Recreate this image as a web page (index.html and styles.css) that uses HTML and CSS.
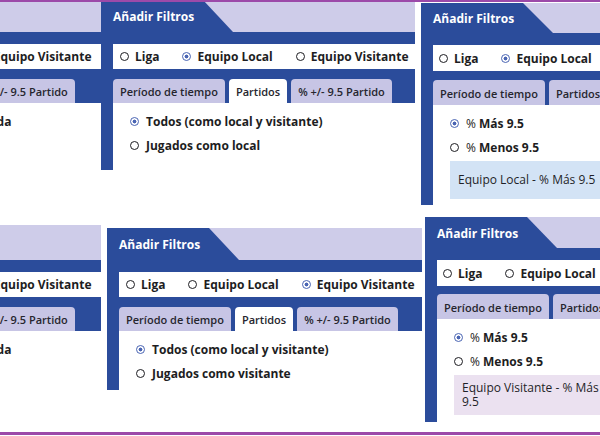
FILE: index.html
```html
<!DOCTYPE html>
<html lang="es">
<head>
<meta charset="utf-8">
<title>Añadir Filtros</title>
<link rel="stylesheet" href="styles.css">
</head>
<body>
<main class="canvas">

  <section class="panel panel--a">
    <header class="panel-head"><h2 class="panel-title">Añadir Filtros</h2></header>
    <div class="scope">
      <span class="opt"><span class="dot"></span><span>Liga</span></span>
      <span class="opt"><span class="dot"></span><span>Equipo Local</span></span>
      <span class="opt"><span class="dot dot--on"></span><span>Equipo Visitante</span></span>
    </div>
    <nav class="tabs">
      <span class="tab tab--on">Período de tiempo</span>
      <span class="tab">Partidos</span>
      <span class="tab">% +/- 9.5 Partido</span>
    </nav>
    <div class="tab-content">
      <span class="opt opt--row"><span class="dot dot--on"></span><span>Toda la temporada consultada</span></span>
      <span class="opt opt--row"><span class="dot"></span><span>Últimos partidos</span></span>
    </div>
  </section>

  <section class="panel panel--b">
    <header class="panel-head"><h2 class="panel-title">Añadir Filtros</h2></header>
    <div class="scope">
      <span class="opt"><span class="dot"></span><span>Liga</span></span>
      <span class="opt"><span class="dot dot--on"></span><span>Equipo Local</span></span>
      <span class="opt"><span class="dot"></span><span>Equipo Visitante</span></span>
    </div>
    <nav class="tabs">
      <span class="tab">Período de tiempo</span>
      <span class="tab tab--on">Partidos</span>
      <span class="tab">% +/- 9.5 Partido</span>
    </nav>
    <div class="tab-content">
      <span class="opt opt--row"><span class="dot dot--on"></span><span>Todos (como local y visitante)</span></span>
      <span class="opt opt--row"><span class="dot"></span><span>Jugados como local</span></span>
    </div>
  </section>

  <section class="panel panel--c">
    <header class="panel-head"><h2 class="panel-title">Añadir Filtros</h2></header>
    <div class="scope">
      <span class="opt"><span class="dot"></span><span>Liga</span></span>
      <span class="opt"><span class="dot dot--on"></span><span>Equipo Local</span></span>
      <span class="opt"><span class="dot"></span><span>Equipo Visitante</span></span>
    </div>
    <nav class="tabs">
      <span class="tab">Período de tiempo</span>
      <span class="tab">Partidos</span>
      <span class="tab tab--on">% +/- 9.5 Partido</span>
    </nav>
    <div class="tab-content">
      <span class="opt opt--row"><span class="dot dot--on"></span><span><span class="pct">%</span> Más 9.5</span></span>
      <span class="opt opt--row"><span class="dot"></span><span><span class="pct">%</span> Menos 9.5</span></span>
      <p class="summary summary--local">Equipo Local - % Más 9.5</p>
    </div>
  </section>

  <section class="panel panel--d">
    <header class="panel-head"><h2 class="panel-title">Añadir Filtros</h2></header>
    <div class="scope">
      <span class="opt"><span class="dot"></span><span>Liga</span></span>
      <span class="opt"><span class="dot"></span><span>Equipo Local</span></span>
      <span class="opt"><span class="dot dot--on"></span><span>Equipo Visitante</span></span>
    </div>
    <nav class="tabs">
      <span class="tab tab--on">Período de tiempo</span>
      <span class="tab">Partidos</span>
      <span class="tab">% +/- 9.5 Partido</span>
    </nav>
    <div class="tab-content">
      <span class="opt opt--row"><span class="dot dot--on"></span><span>Toda la temporada consultada</span></span>
      <span class="opt opt--row"><span class="dot"></span><span>Últimos partidos</span></span>
    </div>
  </section>

  <section class="panel panel--e">
    <header class="panel-head"><h2 class="panel-title">Añadir Filtros</h2></header>
    <div class="scope">
      <span class="opt"><span class="dot"></span><span>Liga</span></span>
      <span class="opt"><span class="dot"></span><span>Equipo Local</span></span>
      <span class="opt"><span class="dot dot--on"></span><span>Equipo Visitante</span></span>
    </div>
    <nav class="tabs">
      <span class="tab">Período de tiempo</span>
      <span class="tab tab--on">Partidos</span>
      <span class="tab">% +/- 9.5 Partido</span>
    </nav>
    <div class="tab-content">
      <span class="opt opt--row"><span class="dot dot--on"></span><span>Todos (como local y visitante)</span></span>
      <span class="opt opt--row"><span class="dot"></span><span>Jugados como visitante</span></span>
    </div>
  </section>

  <section class="panel panel--f">
    <header class="panel-head"><h2 class="panel-title">Añadir Filtros</h2></header>
    <div class="scope">
      <span class="opt"><span class="dot"></span><span>Liga</span></span>
      <span class="opt"><span class="dot"></span><span>Equipo Local</span></span>
      <span class="opt"><span class="dot dot--on"></span><span>Equipo Visitante</span></span>
    </div>
    <nav class="tabs">
      <span class="tab">Período de tiempo</span>
      <span class="tab">Partidos</span>
      <span class="tab tab--on">% +/- 9.5 Partido</span>
    </nav>
    <div class="tab-content">
      <span class="opt opt--row"><span class="dot dot--on"></span><span><span class="pct">%</span> Más 9.5</span></span>
      <span class="opt opt--row"><span class="dot"></span><span><span class="pct">%</span> Menos 9.5</span></span>
      <p class="summary summary--visit">Equipo Visitante - % Más 9.5</p>
    </div>
  </section>

  <div class="rule rule--top"></div>
  <div class="rule rule--bottom"></div>
</main>
</body>
</html>
```

FILE: styles.css
```css
* { box-sizing: border-box; }

html, body {
  margin: 0;
  padding: 0;
  background: #ffffff;
}

body {
  width: 600px;
  height: 436px;
  overflow: hidden;
  font-family: "Open Sans", "Noto Sans", sans-serif;
  color: #1d1d22;
}

.canvas {
  position: relative;
  width: 600px;
  height: 436px;
  overflow: hidden;
}

/* ---------- panel ---------- */
.panel {
  position: absolute;
  width: 314px;
  display: flex;
  flex-direction: column;
  background: #2b4c9b;
}

.panel--a { left: -216px; top: -3px;  width: 318px; height: 173px; }
.panel--b { left: 101px;  top: 0;     height: 170px; }
.panel--c { left: 421px;  top: 3px;   width: 200px; height: 202px; }
.panel--d { left: -216px; top: 225px; width: 317px; height: 170px; }
.panel--e { left: 107px;  top: 228px; width: 315px; height: 162px; }
.panel--f { left: 425px;  top: 217px; width: 200px; height: 205px; }

.panel-head {
  height: 32px;
  flex: none;
  background: #cecce9;
}
.panel--a .panel-head,
.panel--d .panel-head { height: 35px; }
.panel--c .panel-head { height: 30px; }
.panel--f .panel-head { height: 31px; }

.panel-title {
  margin: 0;
  width: 132px;
  height: 100%;
  display: flex;
  align-items: center;
  padding: 1px 0 0 12px;
  background: #2b4c9b;
  clip-path: polygon(0 0, 102px 0, 100% 100%, 0 100%);
  color: #ffffff;
  font-size: 12px;
  font-weight: 700;
  white-space: nowrap;
}

/* ---------- scope radio row ---------- */
.scope {
  flex: none;
  margin: 12px 0 0 12px;
  height: 25px;
  background: #ffffff;
  display: flex;
  align-items: center;
  gap: 23px;
  padding-left: 7px;
  white-space: nowrap;
}
.panel--c .scope,
.panel--f .scope { height: 26px; padding-left: 6px; }

.opt {
  display: inline-flex;
  align-items: center;
  gap: 6px;
  font-size: 12px;
  font-weight: 700;
  color: #1d1d22;
  white-space: nowrap;
}

.dot {
  flex: none;
  width: 9px;
  height: 9px;
  border-radius: 50%;
  border: 1.7px solid #1d1d22;
  background: #ffffff;
}
.dot--on {
  border-color: #4a65b3;
  background: radial-gradient(circle, #4a65b3 0 1.7px, #ffffff 2.2px);
}

/* ---------- tabs ---------- */
.tabs {
  flex: none;
  margin: 10px 0 0 12px;
  height: 24px;
  display: flex;
  gap: 4px;
}
.panel--c .tabs { margin-top: 9px; height: 25px; }
.panel--f .tabs { margin-top: 8px; height: 25px; }

.tab {
  display: flex;
  align-items: center;
  padding: 1px 7px 0;
  border-radius: 4px 4px 0 0;
  background: #c7c5e5;
  font-size: 11px;
  font-weight: 600;
  color: #26262e;
  white-space: nowrap;
}
.tab--on { background: #ffffff; }
.panel--c .tab--on,
.panel--f .tab--on { background: #c7c5e5; }

/* ---------- content ---------- */
.tab-content {
  flex: 1;
  margin-left: 12px;
  background: #ffffff;
  padding: 6px 0 0 17px;
  display: flex;
  flex-direction: column;
  align-items: flex-start;
}

.opt--row {
  height: 24px;
  gap: 7px;
}

.pct { font-weight: 400; }

.summary {
  margin: 2px 0 0;
  width: 168px;
  font-size: 12px;
  font-weight: 400;
  color: #1f1f28;
}
.summary--local {
  padding: 11px 8px;
  line-height: 16px;
  background: #d3e3f5;
}
.summary--visit {
  padding: 6px 8px;
  line-height: 14px;
  background: #ebe1f0;
}

/* ---------- frame rules ---------- */
.rule {
  position: absolute;
  left: 0;
  width: 600px;
  background: #9c4aa9;
}
.rule--top { top: 0; height: 2px; }
.rule--bottom { top: 432px; height: 3px; }
```
